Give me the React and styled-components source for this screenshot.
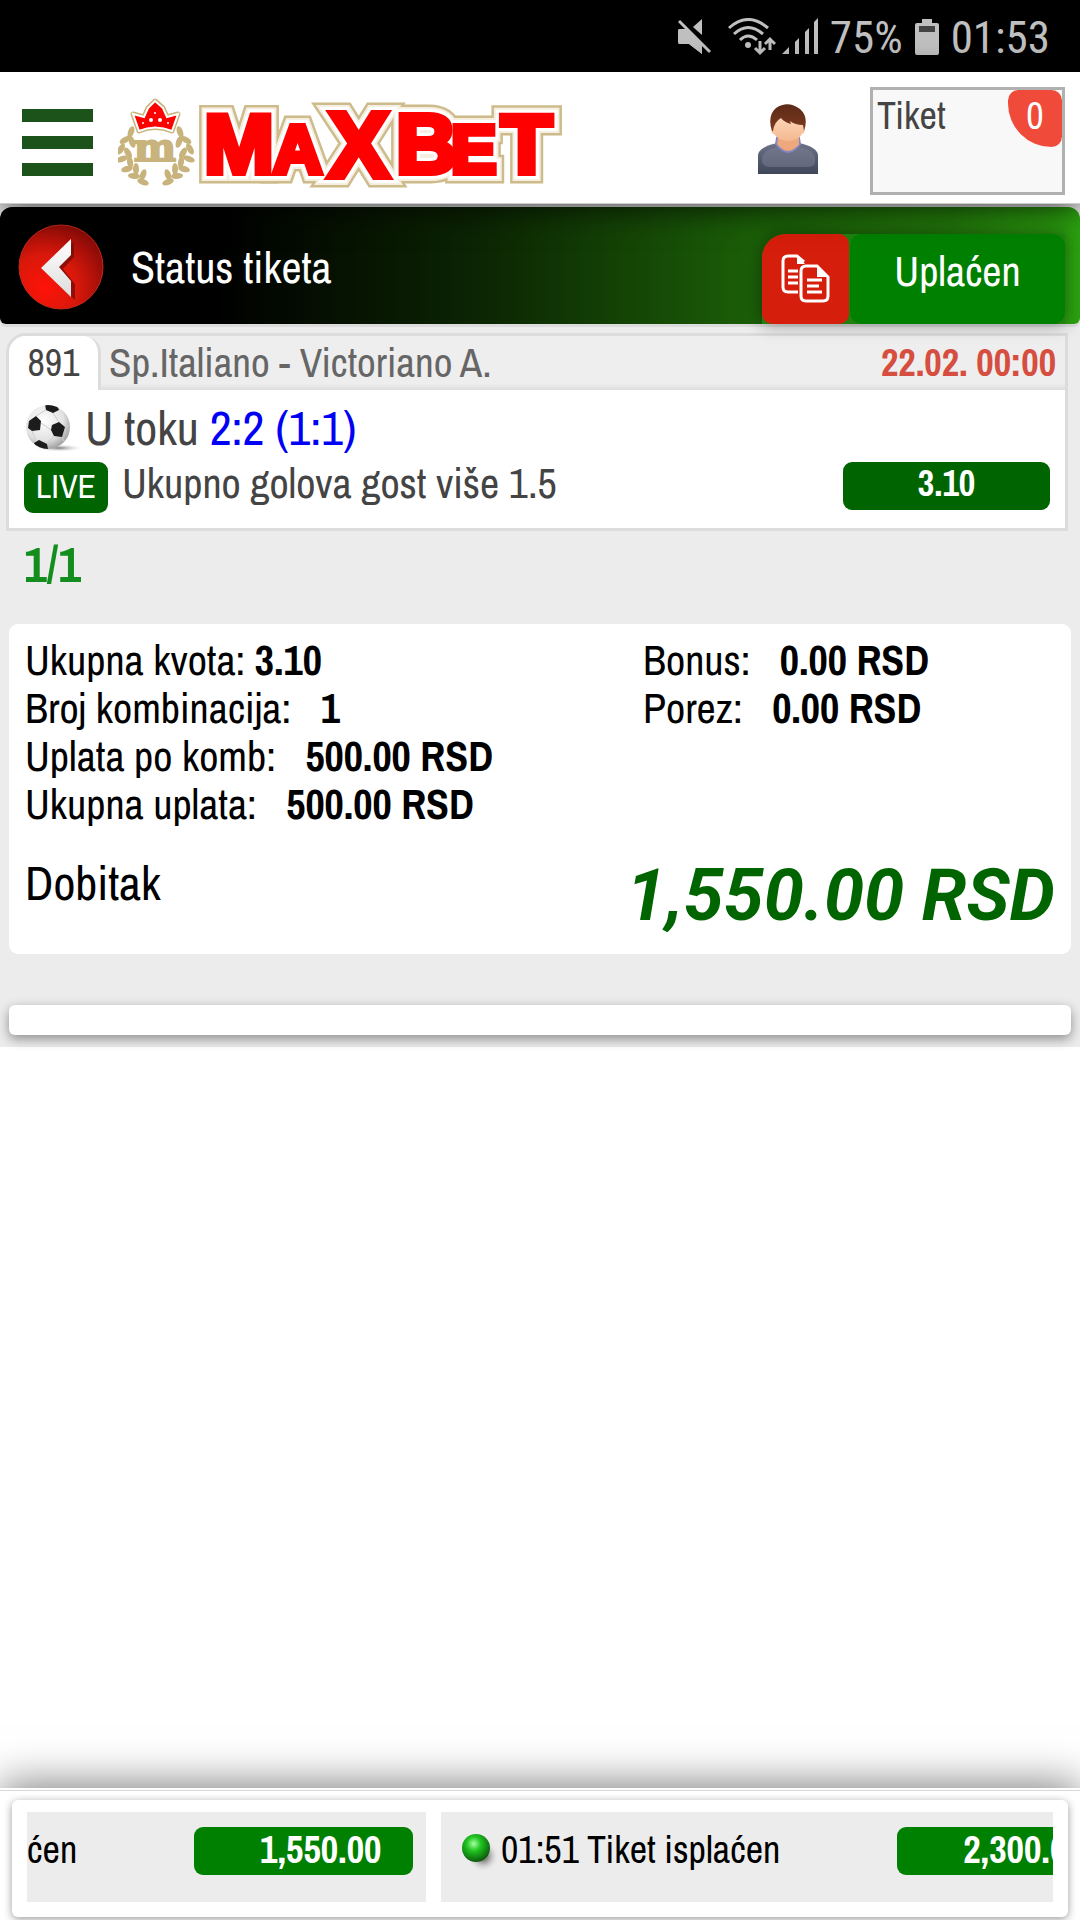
import styled, { createGlobalStyle, css } from "styled-components";

const summary = [
    { label: "Ukupna kvota:", value: "3.10" },
    { label: "Broj kombinacija:", value: "1", wide: true },
    { label: "Uplata po komb:", value: "500.00 RSD", wide: true },
    { label: "Ukupna uplata:", value: "500.00 RSD", wide: true },
];

const extras = [
    { label: "Bonus:", value: "0.00 RSD", wide: true },
    { label: "Porez:", value: "0.00 RSD", wide: true },
];

// one side of the wreath, the other one is mirrored
const leaves = [
    [13, 33, 20], [7, 41, 60], [14, 43, -20], [3, 50, 30], [10, 54, -30],
    [4, 60, 70], [12, 63, -10], [9, 70, 75], [18, 70, 0], [16, 77, 95], [25, 76, 20], [25, 83, 110],
];

const logoLetters = [
    { ch: "M", x: 86, y: 85, size: 84, narrow: true },
    { ch: "A", x: 155, y: 85, size: 68 },
    { ch: "X", x: 210, y: 89, size: 92 },
    { ch: "B", x: 278, y: 85, size: 84, narrow: true },
    { ch: "E", x: 333, y: 85, size: 68 },
    { ch: "T", x: 383, y: 85, size: 84 },
];

function Wreath() {
    return (
        <g fill="#c8b37c">
            {leaves.map(([x, y, r], i) => (
                <ellipse key={i} cx={x} cy={y} rx="3" ry="6" transform={`rotate(${r} ${x} ${y})`} />
            ))}
        </g>
    );
}

function Logo() {
    return (
        <svg width="450" height="110" viewBox="0 0 450 110" role="img" aria-label="MaxBet">
            <defs>
                <text id="wordmark" fontWeight="700" strokeLinejoin="miter" strokeMiterlimit="3">
                    {logoLetters.map((l) => (
                        <tspan
                            key={l.ch}
                            x={l.x}
                            y={l.y}
                            fontSize={l.size}
                            fontFamily={l.narrow ? "Liberation Sans Narrow, Liberation Sans, sans-serif" : "Liberation Sans, sans-serif"}
                        >
                            {l.ch}
                        </tspan>
                    ))}
                </text>
            </defs>
            <g transform="translate(0 11)">
                <Wreath />
                <g transform="translate(75 0) scale(-1 1)"><Wreath /></g>
                <path
                    d="M15 15L26 18L30 9L37 2L45 9L49 18L60 15L54 32Q37 25 21 32Z"
                    fill="#f00" stroke="#c8b37c" strokeWidth="5" strokeLinejoin="round"
                />
                <path
                    d="M15 15L26 18L30 9L37 2L45 9L49 18L60 15L54 32Q37 25 21 32Z"
                    fill="#f00" stroke="#fff" strokeWidth="2"
                />
                <g fill="#fff">
                    <circle cx="37" cy="14" r="1" /><circle cx="33" cy="21" r="2" /><circle cx="42" cy="21" r="2" />
                    <circle cx="25" cy="24" r="1" /><circle cx="50" cy="24" r="1" />
                </g>
                <text
                    x="37" y="62" textAnchor="middle" fontFamily="DejaVu Serif, serif" fontWeight="700" fontSize="40"
                    fill="#c8b37c" stroke="#c8b37c" strokeWidth="2"
                >
                    m
                </text>
            </g>
            <use href="#wordmark" fill="#cdbb8b" stroke="#cdbb8b" strokeWidth="21" />
            <use href="#wordmark" fill="#f5efe2" stroke="#f5efe2" strokeWidth="16" />
            <use href="#wordmark" fill="#fff" stroke="#fff" strokeWidth="12" />
            <use href="#wordmark" fill="#f00" stroke="#f00" strokeWidth="6" />
        </svg>
    );
}

function MuteIcon() {
    return (
        <svg width="38" height="38" viewBox="0 0 38 38" fill="#c0c0c0">
            <path d="M0 13Q0 11 2 11H8L24 27V36L11 26H2Q0 26 0 24zM24 1V17L15 9z" />
            <path d="M1 3L32 34" stroke="#000" strokeWidth="7" />
            <path d="M1 3L32 34" stroke="#c0c0c0" strokeWidth="3" />
            <path d="M0 13Q0 11 2 11H8L24 27V36L11 26H2Q0 26 0 24z" />
        </svg>
    );
}

function WifiIcon() {
    return (
        <svg width="48" height="38" viewBox="0 0 48 38" fill="none" stroke="#c0c0c0" strokeWidth="3">
            <path d="M1 10Q20-7 40 10M6 16Q20 3 35 16M12 22Q20 14 29 22" />
            <circle cx="20" cy="27" r="3" fill="#c0c0c0" stroke="none" />
            <path d="M32 23v12M27 30l5 5l5-5M42 32V21M37 26l5-5l5 5" />
        </svg>
    );
}

function SignalIcon() {
    return (
        <svg width="36" height="38" viewBox="0 0 36 38" fill="#c0c0c0">
            <path d="M0 36L7 29V36zM13 36V24L17 20V36zM23 36V14L27 10V36zM32 36V4L36 0V36z" />
        </svg>
    );
}

function BatteryIcon() {
    return (
        <svg width="24" height="38" viewBox="0 0 24 38">
            <path d="M7 1h10v4h5q2 0 2 2v28q0 2-2 2H2q-2 0-2-2V7q0-2 2-2h5z" fill="#c0c0c0" />
            <path d="M4 8h16v6H4z" fill="#444" />
        </svg>
    );
}

function UserIcon() {
    return (
        <svg width="62" height="72" viewBox="0 0 62 72">
            <defs>
                <linearGradient id="shirt" x2="0" y2="1">
                    <stop offset="0" stopColor="#6d7288" /><stop offset="1" stopColor="#3f4659" />
                </linearGradient>
                <linearGradient id="hair" x2="0" y2="1">
                    <stop offset="0" stopColor="#5c2a17" /><stop offset="1" stopColor="#7c3a20" />
                </linearGradient>
                <linearGradient id="skin" x2="0" y2="1">
                    <stop offset="0" stopColor="#ffd9bd" /><stop offset="1" stopColor="#f3b98f" />
                </linearGradient>
            </defs>
            <path d="M1 71V52Q2 44 20 40H42Q60 44 61 52V71z" fill="url(#shirt)" />
            <path d="M5 55Q6 47 20 44Q31 56 42 44Q57 47 58 55V60Q57 64 50 64H12Q5 63 5 58z" fill="#7c8095" opacity=".5" />
            <path d="M19 41Q31 57 43 41L42 35H20z" fill="#e9a376" stroke="#8486c4" strokeWidth="2" />
            <path d="M21 30H42V42Q31 51 21 42z" fill="#eda87d" />
            <path d="M15 23Q13 31 17 31Q22 38 31 38Q41 38 45 31Q49 30 47 22Q44 11 31 11Q18 11 15 23z" fill="url(#skin)" />
            <path d="M15 28Q10 13 19 5Q31-3 43 6Q52 14 47 28L46 22Q38 22 33 18L34 21Q27 19 24 15Q17 19 16 28z" fill="url(#hair)" />
        </svg>
    );
}

function BackIcon() {
    return (
        <svg width="88" height="88" viewBox="0 0 88 88">
            <defs>
                <radialGradient id="back" cx=".3" cy=".75" r=".8">
                    <stop offset="0" stopColor="#ff1208" /><stop offset=".5" stopColor="#d9180b" /><stop offset="1" stopColor="#8a0b08" />
                </radialGradient>
                <linearGradient id="arrow" x2="0" y2="1">
                    <stop offset="0" stopColor="#fff" /><stop offset="1" stopColor="#ddd" />
                </linearGradient>
            </defs>
            <circle cx="45" cy="44" r="42" fill="url(#back)" stroke="#c22a18" strokeWidth="1" />
            <path d="M58 19V34L47 46L59 61V77L28 47z" fill="#6d0b05" opacity=".7" />
            <path d="M55 16V32L43 44L55 58V74L25 45z" fill="url(#arrow)" />
        </svg>
    );
}

function CopyIcon() {
    return (
        <svg width="50" height="50" viewBox="0 0 50 50" fill="none" stroke="#fff" strokeWidth="3">
            <path d="M17 38H7Q2 38 2 33V7Q2 2 7 2H16L23 8" />
            <path d="M16 2V10H24z" fill="#fff" stroke="none" />
            <path d="M7 17H17M7 23H17M7 29H17" />
            <path d="M25 12H36L47 23V42Q47 47 42 47H25Q20 47 20 42V17Q20 12 25 12z" />
            <path d="M36 11V23H48z" fill="#fff" stroke="none" />
            <path d="M26 26H41M26 32H38M26 38H41" />
        </svg>
    );
}

function SoccerIcon() {
    return (
        <svg width="60" height="48" viewBox="0 0 60 48">
            <defs>
                <radialGradient id="ball" cx=".4" cy=".35" r=".7">
                    <stop offset="0" stopColor="#fff" /><stop offset=".65" stopColor="#e2e2e2" /><stop offset="1" stopColor="#999" />
                </radialGradient>
                <radialGradient id="ballShade">
                    <stop offset="0" stopColor="#777" /><stop offset="1" stopColor="#fff" stopOpacity="0" />
                </radialGradient>
                <clipPath id="ballClip"><circle cx="23" cy="24" r="22" /></clipPath>
            </defs>
            <ellipse cx="34" cy="45" rx="25" ry="4" fill="url(#ballShade)" />
            <circle cx="23" cy="24" r="22" fill="url(#ball)" />
            <g clipPath="url(#ballClip)" fill="#1c1c1c">
                <path d="M20 1L32 2L34 7L28 10L21 7zM4 18L11 13L16 18L15 27L7 28L3 25zM27 22L34 19L40 24L37 34L29 33L26 27zM9 40L14 37L22 41L23 46L12 47z" />
                <path d="M11 13L21 7M28 10L34 19M40 24L46 22M16 20L26 27M29 33L22 41M7 28L11 38M37 34L40 40" fill="none" stroke="#ccc" strokeWidth="1" />
            </g>
        </svg>
    );
}

function GreenDot() {
    return (
        <svg width="36" height="40" viewBox="0 0 36 40">
            <defs>
                <radialGradient id="dot" cx=".42" cy=".35" r=".65">
                    <stop offset="0" stopColor="#a5ffa0" /><stop offset=".4" stopColor="#20c420" /><stop offset="1" stopColor="#0c5a0c" />
                </radialGradient>
                <radialGradient id="dotShade">
                    <stop offset=".3" stopColor="#888" /><stop offset="1" stopColor="#ececec" stopOpacity="0" />
                </radialGradient>
            </defs>
            <circle cx="21" cy="23" r="16" fill="url(#dotShade)" />
            <circle cx="14" cy="15" r="14" fill="url(#dot)" />
        </svg>
    );
}

function Line({ label, value, wide }) {
    return (
        <StLine $wide={wide}>
            {label} <b>{value}</b>
        </StLine>
    );
}

export default function App() {
    return (
        <StPage>
            <GlobalStyle />
            <StStatusBar>
                <MuteIcon />
                <StWifi><WifiIcon /><SignalIcon /></StWifi>
                <span>75%</span>
                <BatteryIcon />
                <span>01:53</span>
            </StStatusBar>

            <StHeader>
                <StMenuButton aria-label="Meni"><i /><i /><i /></StMenuButton>
                <StLogoLink href="#"><Logo /></StLogoLink>
                <StIconButton aria-label="Nalog"><UserIcon /></StIconButton>
                <StTicketButton>
                    Tiket
                    <StCount>0</StCount>
                </StTicketButton>
            </StHeader>

            <StMain>
                <StTitleBar>
                    <StIconButton aria-label="Nazad"><BackIcon /></StIconButton>
                    <StTitle>Status tiketa</StTitle>
                    <StActions>
                        <StCopyButton aria-label="Kopiraj"><CopyIcon /></StCopyButton>
                        <StPaid>Uplaćen</StPaid>
                    </StActions>
                </StTitleBar>

                <StMatch>
                    <StMatchHead>
                        <StCode>891</StCode>
                        <StTeams>Sp.Italiano - Victoriano A.</StTeams>
                        <StDate>22.02. 00:00</StDate>
                    </StMatchHead>
                    <StScore>
                        <SoccerIcon />
                        <span>U toku <em>2:2 (1:1)</em></span>
                    </StScore>
                    <StBet>
                        <StLive>LIVE</StLive>
                        <StBetName>Ukupno golova gost više 1.5</StBetName>
                        <StOdds>3.10</StOdds>
                    </StBet>
                </StMatch>
                <StHits>1/1</StHits>

                <StSummary>
                    <StColumns>
                        <div>{summary.map((row) => <Line key={row.label} {...row} />)}</div>
                        <div>{extras.map((row) => <Line key={row.label} {...row} />)}</div>
                    </StColumns>
                    <StWin>
                        <span>Dobitak</span>
                        <StAmount>1,550.00 RSD</StAmount>
                    </StWin>
                </StSummary>

                <StEmptyCard />
            </StMain>

            <StFooter>
                <StTicker>
                    <StTickerItem $first>
                        <span>ćen</span>
                        <StPill>1,550.00</StPill>
                    </StTickerItem>
                    <StTickerItem>
                        <GreenDot />
                        <span>01:51 Tiket isplaćen</span>
                        <StPill>2,300.00</StPill>
                    </StTickerItem>
                </StTicker>
            </StFooter>
        </StPage>
    );
}

const GlobalStyle = createGlobalStyle`
    * {
        box-sizing: border-box;
    }
    body {
        margin: 0;
        background-color: #ffffff;
        font-family: "Archivo Narrow", "Liberation Sans Narrow", "Liberation Sans", sans-serif;
    }
    button {
        padding: 0;
        border: none;
        background: none;
        font: inherit;
        cursor: pointer;
    }
    svg {
        display: block;
        flex: none;
    }
`;

const StPage = styled.div`
    display: flex;
    flex-direction: column;
    min-height: 100vh;
    overflow: hidden;
    white-space: nowrap;
`;

const StStatusBar = styled.div`
    display: flex;
    justify-content: flex-end;
    align-items: center;
    gap: 12px;
    height: 72px;
    padding: 2px 30px 0 0;
    background-color: #000000;
    color: #c0c0c0;
    font-family: "Roboto Condensed", "Liberation Sans Narrow", Roboto, sans-serif;
    font-size: 45px;
`;

const StWifi = styled.span`
    display: flex;
    gap: 6px;
`;

const StHeader = styled.header`
    position: relative;
    z-index: 1;
    display: flex;
    align-items: center;
    height: 132px;
    padding: 2px 15px 0 22px;
    background-color: #ffffff;
    border-bottom: 1px solid #cccccc;
    box-shadow: 0 4px 30px rgba(0, 0, 0, 0.75);
`;

const StMenuButton = styled.button`
    display: flex;
    flex-direction: column;
    gap: 14px;
    width: 71px;
    padding-top: 8px;

    i {
        height: 13px;
        background-color: #1b531b;
    }
`;

const StLogoLink = styled.a`
    flex: 1;
    padding: 8px 0 0 25px;
`;

const StIconButton = styled.button`
    flex: none;
`;

const StTicketButton = styled.button`
    display: flex;
    justify-content: space-between;
    align-items: flex-start;
    width: 195px;
    height: 108px;
    margin: 4px 0 0 51px;
    padding-left: 4px;
    background-color: #f8f8f8;
    border: 3px solid #b0b0b0;
    color: #444444;
    font-size: 38px;
    line-height: 52px;
`;

const StCount = styled.span`
    width: 54px;
    height: 57px;
    background-color: #f04a3a;
    border-radius: 12px 12px 12px 50px;
    color: #ffffff;
    text-align: center;
`;

const StMain = styled.main`
    padding-bottom: 12px;
    background-color: #ececec;
`;

const StTitleBar = styled.div`
    display: flex;
    align-items: center;
    height: 117px;
    margin-top: 3px;
    padding: 2px 15px 0 16px;
    background: linear-gradient(to right, #000000 20%, #0c2603 45%, #1b5f08 70%, #237a0b 88%, #2ca210);
    border-radius: 12px 12px 6px 6px;
    box-shadow: 0 3px 0 #dcdcdc;
    color: #ffffff;
`;

const StTitle = styled.h1`
    flex: 1;
    margin: 0 0 0 27px;
    font-size: 44px;
    font-weight: 400;
`;

const StActions = styled.div`
    display: flex;
    align-self: flex-end;
    gap: 1px;
    height: 90px;
    background-color: #218010;
    border-top-left-radius: 24px;
    box-shadow: 0 0 18px rgba(0, 0, 0, 0.4);
`;

const StCopyButton = styled.button`
    display: flex;
    justify-content: center;
    align-items: center;
    width: 87px;
    background-color: #d51e0b;
    border-radius: 24px 10px 10px 10px;
`;

const StPaid = styled.div`
    width: 215px;
    background-color: #008000;
    border-radius: 12px;
    font-size: 42px;
    line-height: 74px;
    text-align: center;
`;

const StMatch = styled.section`
    margin: 9px 12px 0 6px;
    padding-bottom: 15px;
    background-color: #ffffff;
    border: 3px solid #dcdcdc;
    border-top-left-radius: 20px;
    color: #444444;
`;

const StMatchHead = styled.div`
    display: flex;
    height: 54px;
    background: linear-gradient(#eeeeee 88%, #dedede);
    border-top-left-radius: 17px;
    line-height: 54px;
`;

const StCode = styled.div`
    width: 92px;
    background-color: #ffffff;
    border-right: 3px solid #dcdcdc;
    border-radius: 17px 17px 0 0;
    font-size: 38px;
    text-align: center;
`;

const StTeams = styled.div`
    flex: 1;
    padding-left: 8px;
    color: #666666;
    font-size: 41px;
`;

const StDate = styled.div`
    padding-right: 9px;
    color: #d54e40;
    font-size: 38px;
    font-weight: 700;
`;

const StScore = styled.div`
    display: flex;
    align-items: center;
    height: 72px;
    padding: 2px 0 0 16px;
    font-size: 48px;

    em {
        color: #0000f5;
        font-style: normal;
    }
`;

const pill = css`
    height: 48px;
    border-radius: 9px;
    color: #ffffff;
    text-align: center;
`;

const StBet = styled.div`
    display: flex;
    padding: 0 15px;
    font-size: 42px;
`;

const StLive = styled.span`
    ${pill}
    width: 84px;
    height: 51px;
    background-color: #006400;
    font-size: 34px;
    line-height: 48px;
`;

const StBetName = styled.span`
    flex: 1;
    padding-left: 14px;
    line-height: 42px;
`;

const StOdds = styled.span`
    ${pill}
    width: 207px;
    background-color: #006400;
    font-size: 36px;
    font-weight: 700;
    line-height: 42px;
`;

const StHits = styled.div`
    height: 93px;
    padding-left: 24px;
    color: #138d1e;
    font-size: 50px;
    font-weight: 700;
    line-height: 66px;
`;

const StSummary = styled.section`
    margin: 0 9px;
    padding: 12px 16px 15px;
    background-color: #ffffff;
    border-radius: 9px;
`;

const StColumns = styled.div`
    display: grid;
    grid-template-columns: 3fr 2fr;
    font-size: 42px;
    line-height: 48px;
`;

const StLine = styled.div`
    b {
        margin-left: ${(props) => (props.$wide ? 20 : 0)}px;
    }
`;

const StWin = styled.div`
    display: flex;
    justify-content: space-between;
    padding-top: 25px;
    font-size: 48px;
    line-height: 60px;
`;

const StAmount = styled.strong`
    color: #006400;
    font-family: Roboto, sans-serif;
    font-size: 72px;
    font-style: italic;
    line-height: 86px;
`;

const StEmptyCard = styled.div`
    height: 30px;
    margin: 51px 9px 0;
    background-color: #ffffff;
    border-radius: 6px;
    box-shadow: 0 4px 12px rgba(0, 0, 0, 0.4);
`;

const StFooter = styled.footer`
    margin-top: auto;
    padding: 9px 12px 3px;
    border-top: 1px solid #d8d8d8;
    box-shadow: 0 -2px 0 #ffffff, 0 -6px 40px rgba(0, 0, 0, 0.5);
`;

const StTicker = styled.div`
    display: flex;
    gap: 15px;
    padding: 12px 15px 15px;
    background-color: #ffffff;
    border-radius: 6px;
    box-shadow: 0 2px 9px rgba(0, 0, 0, 0.4);
`;

const StTickerItem = styled.div`
    display: flex;
    flex: ${(props) => (props.$first ? "none" : "1")};
    width: ${(props) => (props.$first ? "399px" : "auto")};
    height: 90px;
    min-width: 0;
    overflow: hidden;
    padding: 15px 15px 0 ${(props) => (props.$first ? 0 : 21)}px;
    background-color: #ececec;
    font-size: 38px;
    line-height: 46px;

    svg {
        margin-top: 6px;
        margin-right: 3px;
    }
`;

const StPill = styled.span`
    ${pill}
    flex: none;
    width: 219px;
    margin-left: 117px;
    padding-left: 34px;
    background-color: #008000;
    font-weight: 700;
`;
